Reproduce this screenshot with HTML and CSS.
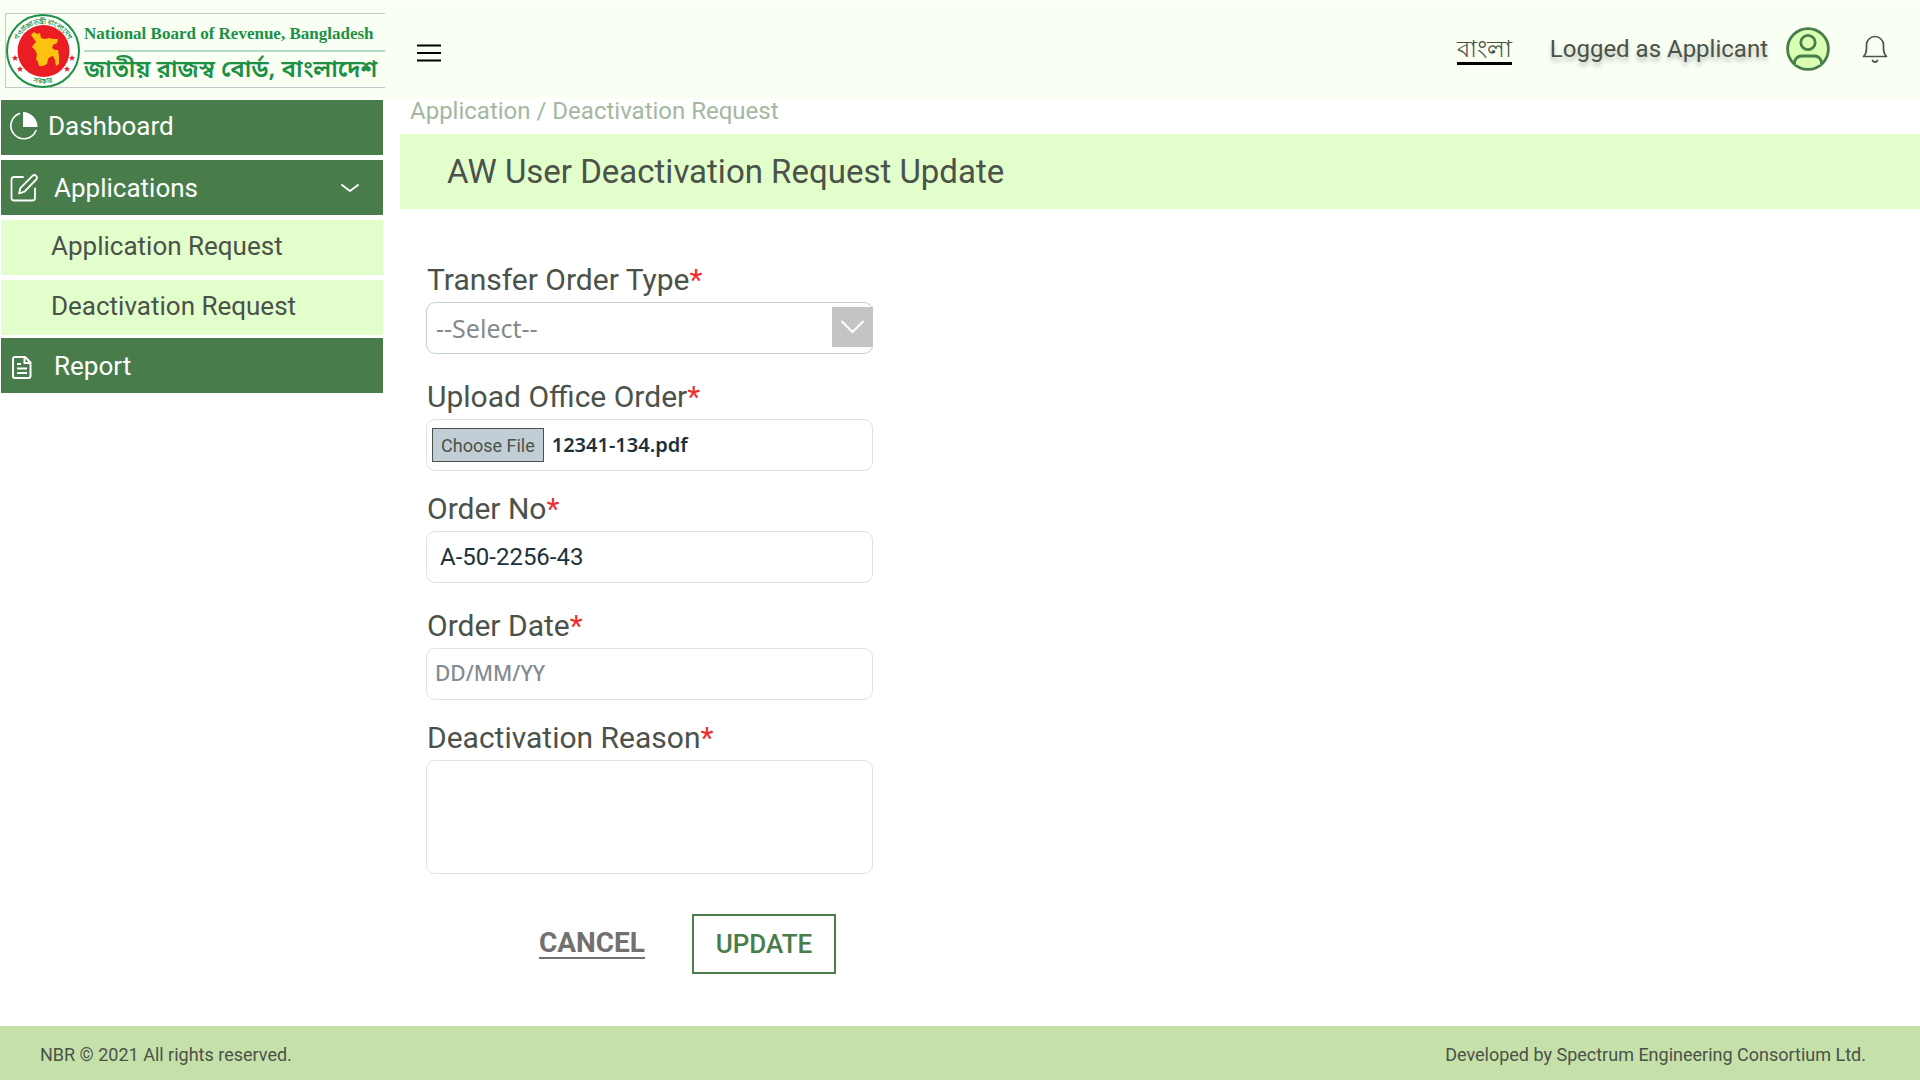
FILE: index.html
```html
<!DOCTYPE html>
<html lang="en">
<head>
<meta charset="utf-8">
<meta name="viewport" content="width=device-width, initial-scale=1">
<title>AW User Deactivation Request Update</title>
<link rel="stylesheet" href="styles.css">
</head>
<body>
<div class="page">
  <header class="topbar">
    <a class="brand" href="#">
      <svg class="brand-seal" viewBox="0 0 74 74" aria-hidden="true">
        <defs>
          <path id="arc-top" d="M12.500 48A27 27 0 1 1 61.500 48"/>
          <path id="arc-bottom" d="M14 60A32.500 32.500 0 0 0 60 60"/>
        </defs>
        <circle cx="37" cy="37" r="36" fill="#fff" stroke="#1c9045" stroke-width="2"/>
        <circle cx="37.500" cy="37" r="26" fill="#ea1c24"/>
        <path fill="#fbc20f" d="M25 21l3-3 3 2 3-1 1 5 4 1 4-1 4 1 5 0-1 4-4 2-1 3 3 2 3 0 1 6 0 8-3 2-1-6-2-4-3 1-2 2-1 5-4 2-4 0-1-4-2-3 1-5-2-4-3-3 2-3 2-2-2-3z"/>
        <text class="seal-text"><textPath href="#arc-top" startOffset="50%" text-anchor="middle">গণপ্রজাতন্ত্রী বাংলাদেশ</textPath></text>
        <text class="seal-text"><textPath href="#arc-bottom" startOffset="50%" text-anchor="middle">সরকার</textPath></text>
        <g fill="#ea1c24">
          <path id="star" d="M9 41l.900 2 2.200.200-1.700 1.400.600 2.200-2-1.200-2 1.200.600-2.200-1.700-1.400 2.200-.200z"/>
          <use href="#star" x="5" y="11"/><use href="#star" x="57"/><use href="#star" x="52" y="11"/>
        </g>
      </svg>
      <span class="brand-text">
        <span class="brand-en">National Board of Revenue, Bangladesh</span>
        <span class="brand-bn" lang="bn">জাতীয় রাজস্ব বোর্ড, বাংলাদেশ</span>
      </span>
    </a>
    <button class="icon-button menu-button" type="button" aria-label="Toggle menu">
      <svg width="24" height="20" viewBox="0 0 24 20" stroke="#000" stroke-width="2"><path d="M0 2.500h24M0 10h24M0 17.500h24"/></svg>
    </button>
    <div class="account">
      <a class="language" href="#" lang="bn">বাংলা</a>
      <span class="logged">Logged as Applicant</span>
      <a class="avatar" href="#" aria-label="Profile">
        <svg width="44" height="44" viewBox="0 0 44 44" fill="#d9ffb3" stroke="#487d4b" stroke-width="2.800"><circle cx="22" cy="22" r="20.400"/><circle cx="22" cy="15.500" r="7.200"/><path d="M8.500 37.500v-1.500a7 7 0 0 1 7-7h13a7 7 0 0 1 7 7v1.500"/></svg>
      </a>
      <button class="icon-button" type="button" aria-label="Notifications">
        <svg width="26" height="28" viewBox="0 0 26 28" fill="none" stroke="#4b524a" stroke-width="1.700" stroke-linecap="round" stroke-linejoin="round"><path d="M1.500 21.500c2-2 3-5 3-8V10a8.500 8.500 0 0 1 17 0v3.500c0 3 1 6 3 8zM10.500 25.500a2.800 2.800 0 0 0 5 0"/></svg>
      </button>
    </div>
  </header>

  <div class="body">
    <nav class="sidebar" aria-label="Main">
      <a class="nav-item nav-item-tight" href="#">
        <svg class="nav-icon" viewBox="0 0 28 28" fill="none" stroke="#fff" stroke-width="1.600" stroke-linecap="round"><path d="M9.500 1.500a13 13 0 1 0 16.500 17"/><path d="M13 0a15 15 0 0 1 14.500 15H13z" fill="#fff" stroke="none"/></svg>
        <span>Dashboard</span>
      </a>
      <a class="nav-item" href="#">
        <svg class="nav-icon" viewBox="0 0 28 28" fill="none" stroke="#fff" stroke-width="1.800" stroke-linecap="round" stroke-linejoin="round"><path d="M13 3H4a2.500 2.500 0 0 0-2.500 2.500V24A2.500 2.500 0 0 0 4 26.500h18.500A2.500 2.500 0 0 0 25 24v-9.500"/><path d="M22.500 1.800a2.600 2.600 0 0 1 3.700 3.700L14.500 17.700 9 19.500l1.500-5.700z"/></svg>
        <span>Applications</span>
        <svg class="nav-caret" viewBox="0 0 18 8" fill="none" stroke="#fff" stroke-width="1.800" stroke-linecap="round"><path d="M1 1l8 6 8-6"/></svg>
      </a>
      <a class="nav-sub" href="#">Application Request</a>
      <a class="nav-sub nav-sub-last" href="#">Deactivation Request</a>
      <a class="nav-item" href="#">
        <svg class="nav-icon" viewBox="0 0 28 28" fill="none" stroke="#fff" stroke-width="2"><path d="M5 5h10l5.500 5.500V24a2 2 0 0 1-2 2H5a2 2 0 0 1-2-2V7a2 2 0 0 1 2-2z" stroke-linejoin="round"/><path d="M14.500 5v6h6M7 12h4M7 16.500h10M7 21h10"/></svg>
        <span>Report</span>
      </a>
    </nav>

    <main class="content">
      <div class="breadcrumb"><a href="#">Application</a> / <a href="#">Deactivation Request</a></div>
      <h1 class="title">AW User Deactivation Request Update</h1>
      <form class="form">
        <div class="field">
          <label for="type">Transfer Order Type<span class="required">*</span></label>
          <div class="select-box">
            <select id="type" class="control control-select"><option>--Select--</option></select>
            <svg class="select-arrow" viewBox="0 0 40 40" fill="none" stroke="#fff" stroke-width="2" stroke-linecap="round"><path d="M9.500 14.500L20 25l10.500-10.500"/></svg>
          </div>
        </div>
        <div class="field field-close">
          <label for="file">Upload Office Order<span class="required">*</span></label>
          <div class="control control-file">
            <button id="file" class="file-button" type="button">Choose File</button>
            <span class="file-name">12341-134.pdf</span>
          </div>
        </div>
        <div class="field">
          <label for="number">Order No<span class="required">*</span></label>
          <input id="number" class="control" type="text" value="A-50-2256-43">
        </div>
        <div class="field field-close">
          <label for="date">Order Date<span class="required">*</span></label>
          <input id="date" class="control control-date" type="text" placeholder="DD/MM/YY">
        </div>
        <div class="field">
          <label for="reason">Deactivation Reason<span class="required">*</span></label>
          <textarea id="reason" class="control control-area"></textarea>
        </div>
        <div class="actions">
          <button class="cancel" type="button">CANCEL</button>
          <button class="update" type="submit">UPDATE</button>
        </div>
      </form>
    </main>
  </div>

  <footer class="footer">
    <span>NBR © 2021 All rights reserved.</span>
    <span>Developed by Spectrum Engineering Consortium Ltd.</span>
  </footer>
</div>
</body>
</html>
```
FILE: styles.css
```css
* {
  box-sizing: border-box;
}

body {
  margin: 0;
  background: #fff;
  color: #4b524a;
  font-family: Roboto, "Liberation Sans", sans-serif;
}

a {
  color: inherit;
  text-decoration: none;
}

button {
  font-family: inherit;
  cursor: pointer;
}

svg {
  display: block;
  flex: none;
}

.page {
  display: flex;
  flex-direction: column;
  min-height: 100vh;
}

/* Top bar */
.topbar {
  display: flex;
  align-items: center;
  height: 98px;
  padding: 0 32px 2px 5px;
  border-top: 1px solid #fff;
  background: #f9fff3;
}

.brand {
  display: flex;
  align-items: center;
  gap: 4px;
  width: 380px;
  height: 75px;
  margin-top: 4px;
  border: 1px solid #c6c6cb;
  border-right: 0;
}

.brand-seal {
  width: 74px;
  height: 74px;
}

.seal-text {
  fill: #1c9045;
  font-size: 7px;
  font-weight: 700;
}

.brand-text {
  display: flex;
  flex: 1;
  flex-direction: column;
  min-width: 0;
  color: #1c9045;
  white-space: nowrap;
}

.brand-en {
  padding-top: 4px;
  border-bottom: 2px solid #b5dcc0;
  font: 700 17px/32px "Liberation Serif", serif;
}

.brand-bn {
  padding-top: 2px;
  font: 600 24px/34px "Noto Sans Bengali", "Noto Sans", sans-serif;
}

.icon-button {
  padding: 0;
  border: 0;
  background: none;
}

.menu-button {
  margin: 8px 0 0 32px;
}

.account {
  display: flex;
  align-items: center;
  margin-left: auto;
}

.language {
  padding-top: 4px;
  border-bottom: 3px solid #000;
  font-size: 24px;
  line-height: 25px;
}

.logged {
  margin: 0 18px 0 38px;
  font-size: 24px;
  text-shadow: 0 4px 4px rgba(0, 0, 0, 0.25);
}

.avatar {
  margin-right: 32px;
}

/* Body columns */
.body {
  display: grid;
  flex: 1;
  grid-template-columns: 384px 1fr;
  gap: 16px;
}

.sidebar {
  display: flex;
  flex-direction: column;
  gap: 5px;
  padding: 2px 1px 0;
}

.nav-item,
.nav-sub {
  display: flex;
  align-items: center;
  height: 55px;
  font-size: 26px;
}

.nav-item {
  gap: 16px;
  padding: 0 24px 0 9px;
  background: #487d4b;
  color: #fff;
}

.nav-item-tight {
  gap: 10px;
  padding-bottom: 4px;
}

.nav-icon {
  width: 28px;
  height: 28px;
}

.nav-caret {
  width: 18px;
  height: 8px;
  margin-left: auto;
}

.nav-sub {
  padding: 0 0 3px 50px;
  background: #e2fecb;
}

.nav-sub-last {
  margin-bottom: -2px;
}

/* Content */
.breadcrumb {
  height: 36px;
  padding-left: 10px;
  color: #a3b8a0;
  font-size: 24px;
  line-height: 27px;
}

.title {
  margin: 0;
  padding: 0 47px;
  background: #e2fecb;
  font-size: 33px;
  font-weight: 400;
  line-height: 75px;
}

.form {
  max-width: 447px;
  margin: 51px 0 52px 26px;
}

.field {
  margin-bottom: 23px;
}

.field-close {
  margin-bottom: 18px;
}

label {
  display: block;
  margin-bottom: 2px;
  padding-left: 1px;
  font-size: 30px;
  line-height: 40px;
}

.required {
  color: #f02c2c;
}

.control {
  display: block;
  width: 100%;
  height: 52px;
  padding: 0 13px;
  border: 1px solid #e0e2e4;
  border-radius: 9px;
  background: #fff;
  color: #1d313c;
  font: 24px/28px Roboto, sans-serif;
}

.select-box {
  position: relative;
}

.control-select {
  padding: 0 9px;
  border-color: #bfced6;
  appearance: none;
  color: #838b91;
  font: 25px/28px "Noto Sans", sans-serif;
}

.select-arrow {
  position: absolute;
  top: 5px;
  right: 0;
  width: 41px;
  height: 40px;
  background: #c4c4c4;
  pointer-events: none;
}

.control-file {
  display: flex;
  align-items: center;
  gap: 8px;
  padding: 0 5px;
}

.file-button {
  height: 34px;
  padding: 0 8px;
  border: 1px solid #4b524a;
  background: #c2ced6;
  color: #4b524a;
  font-size: 18px;
}

.file-name {
  font: 600 20px/28px "Noto Sans", sans-serif;
}

.control-date {
  padding: 0 8px 2px;
  font: 500 21px/28px "Noto Sans", sans-serif;
}

.control-date::placeholder {
  color: #838b91;
}

.control-area {
  height: 114px;
  resize: none;
}

.actions {
  display: flex;
  align-items: center;
  justify-content: flex-end;
  gap: 47px;
  margin-top: 40px;
  padding-right: 37px;
}

.cancel {
  padding: 0;
  border: 0;
  border-bottom: 2px solid #73706f;
  background: none;
  color: #73706f;
  font-size: 28px;
  font-weight: 700;
  line-height: 28px;
}

.update {
  width: 144px;
  height: 60px;
  border: 2px solid #487d4b;
  background: #fff;
  color: #487d4b;
  font-size: 26px;
  font-weight: 500;
}

/* Footer */
.footer {
  display: flex;
  align-items: center;
  justify-content: space-between;
  height: 54px;
  padding: 2px 54px 0 40px;
  background: #c5e1a9;
  font-size: 18px;
}
```
